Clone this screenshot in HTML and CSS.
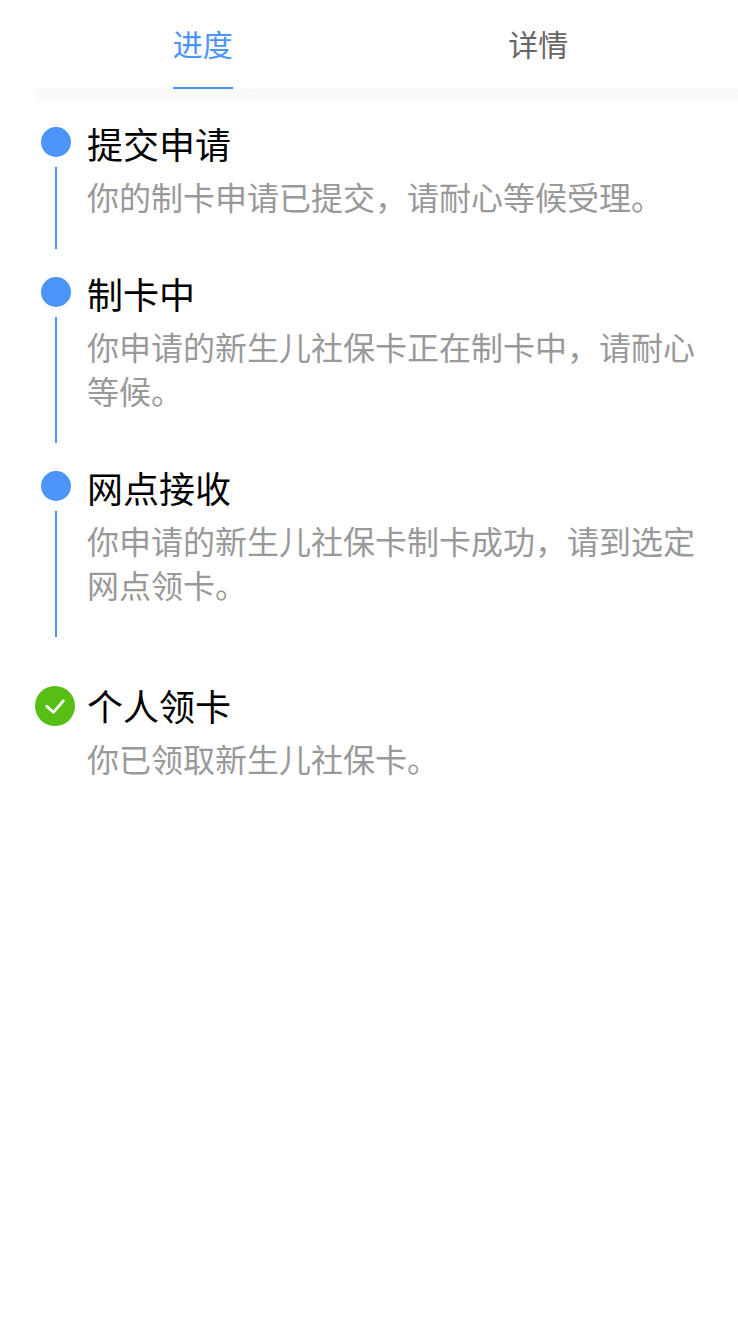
FILE: index.html
```html
<!DOCTYPE html>
<html lang="zh-CN">
<head>
    <meta charset="UTF-8">
    <meta name="viewport" content="width=device-width, initial-scale=1.0">
    <title>制卡进度</title>
    <link rel="stylesheet" href="styles.css">
</head>
<body>
    <div class="page">
        <div class="tabs" role="tablist">
            <div class="tab-item">
                <button type="button" class="tab active" role="tab" aria-selected="true">进度</button>
            </div>
            <div class="tab-item">
                <button type="button" class="tab" role="tab" aria-selected="false">详情</button>
            </div>
        </div>

        <ol class="steps">
            <li class="step">
                <div class="marker"><span class="dot"></span><span class="line"></span></div>
                <div class="content">
                    <h2 class="title">提交申请</h2>
                    <p class="desc">你的制卡申请已提交，请耐心等候受理。</p>
                </div>
            </li>
            <li class="step">
                <div class="marker"><span class="dot"></span><span class="line"></span></div>
                <div class="content">
                    <h2 class="title">制卡中</h2>
                    <p class="desc">你申请的新生儿社保卡正在制卡中，请耐心等候。</p>
                </div>
            </li>
            <li class="step">
                <div class="marker"><span class="dot"></span><span class="line"></span></div>
                <div class="content">
                    <h2 class="title">网点接收</h2>
                    <p class="desc">你申请的新生儿社保卡制卡成功，请到选定网点领卡。</p>
                </div>
            </li>
            <li class="step finished">
                <div class="marker">
                    <svg class="check" viewBox="0 0 40 40" aria-hidden="true">
                        <circle cx="20" cy="20" r="20" fill="#57be14"/>
                        <path d="M11.7 20.2L18.4 26.3L28.3 14.8" fill="none" stroke="#fff" stroke-width="2.8" stroke-linecap="round" stroke-linejoin="round"/>
                    </svg>
                </div>
                <div class="content">
                    <h2 class="title">个人领卡</h2>
                    <p class="desc">你已领取新生儿社保卡。</p>
                </div>
            </li>
        </ol>
    </div>
</body>
</html>
```

FILE: styles.css
```css
* {
    box-sizing: border-box;
}
body {
    margin: 0;
    background-color: #fff;
    color: #000;
    font-family: "Noto Sans CJK SC", sans-serif;
}
.page {
    padding-left: 35px;
}
.tabs {
    display: flex;
    padding-right: 32px;
}
.tab-item {
    flex: 1;
    display: flex;
    justify-content: center;
}
.tab {
    height: 89px;
    padding: 0 0 2px;
    border: none;
    border-bottom: 2px solid transparent;
    background: none;
    color: #666;
    font: inherit;
    font-size: 30px;
    line-height: 44px;
    cursor: pointer;
}
.tab.active {
    color: #4b94f8;
    border-bottom-color: #4b94f8;
}
.steps {
    margin: 0;
    padding: 35px 32px 0 0;
    list-style: none;
    background: linear-gradient(#f8f8f8, #fff) no-repeat top / 100% 20px;
}
.step {
    display: flex;
    gap: 10px;
}
.marker {
    flex: none;
    width: 42px;
    display: flex;
    flex-direction: column;
    align-items: center;
    gap: 10px;
}
.dot {
    width: 30px;
    height: 30px;
    margin-top: 3px;
    border-radius: 50%;
    background-color: #4b94f8;
}
.line {
    flex: 1;
    width: 2px;
    margin-bottom: 25px;
    background-color: #4b94f8;
}
.content {
    flex: 1;
    padding-bottom: 56px;
}
.title {
    margin: 0 0 12px;
    font-size: 36px;
    font-weight: 400;
    line-height: 38px;
}
.desc {
    margin: 0;
    color: #999;
    font-size: 32px;
    line-height: 44px;
}
.finished {
    margin-top: 24px;
}
.finished .marker {
    align-items: flex-start;
}
.check {
    width: 40px;
    height: 40px;
}
```
